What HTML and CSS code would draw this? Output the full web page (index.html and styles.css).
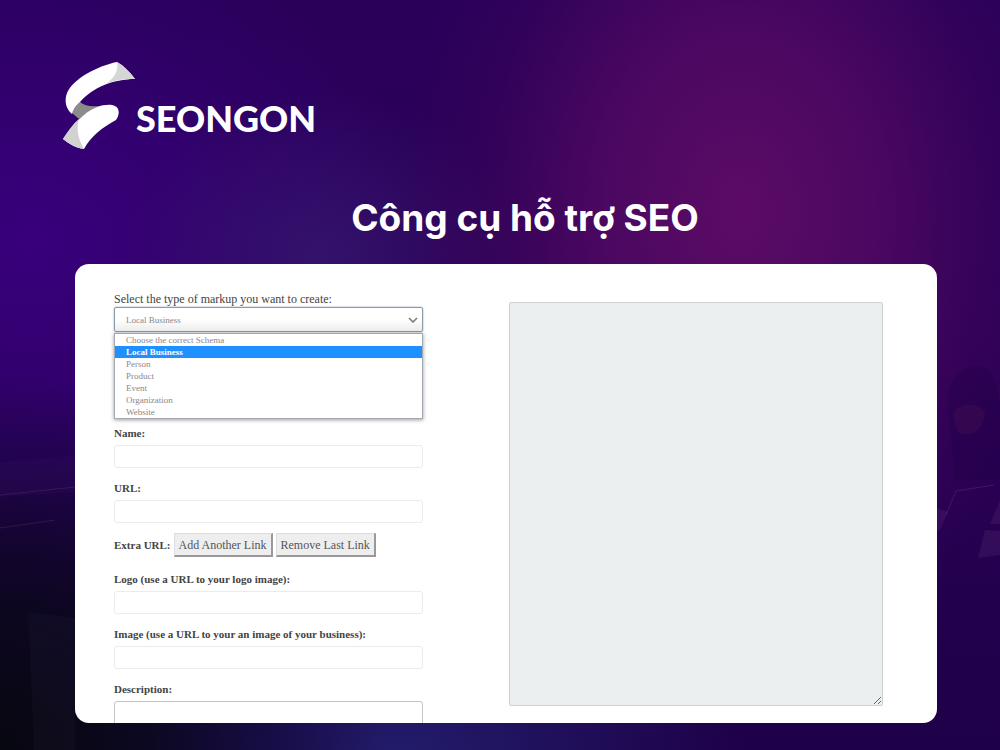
FILE: index.html
```html
<!DOCTYPE html>
<html lang="vi">
<head>
    <meta charset="UTF-8">
    <meta name="viewport" content="width=device-width, initial-scale=1.0">
    <title>SEONGON - Công cụ hỗ trợ SEO</title>
    <link rel="stylesheet" href="styles.css">
</head>
<body>
    <svg class="backdrop" viewBox="0 0 1000 750" preserveAspectRatio="none" aria-hidden="true">
        <path d="M0 462 L80 455 L80 492 L0 497Z" fill="#4a1a70" opacity=".12"/>
        <path d="M0 495 L75 487 M0 528 L55 520" stroke="#7b4a8e" stroke-width="1" opacity=".25"/>
        <path d="M28 612 L75 618 L75 750 L34 750Z" fill="#3a3a5c" opacity=".1"/>
        <path d="M948 410 C946 376 965 362 982 367 C996 372 1000 392 1000 420 L1000 480 L955 480Z" fill="#16003a" opacity=".2"/>
        <path d="M953 414 C958 402 978 402 985 412 C984 430 970 440 958 432Z" fill="#682052" opacity=".18"/>
        <path d="M946 515 L956 491 L994 485" fill="none" stroke="#6d3b84" opacity=".35"/>
        <path d="M937 508 L948 512 L940 530 L937 531Z M1000 500 L990 524 L1000 524Z M985 530 L1000 531 L1000 555 L978 558Z" fill="#6d3b84" opacity=".2"/>
    </svg>

    <div class="page">
        <a class="logo" href="#">
            <svg class="logo-mark" viewBox="0 0 74 90" aria-hidden="true">
                <path d="M18 41 C23 45 29 46 37 45 L17 58 L10 52 C12 47 14 44 18 41Z" fill="#8c8c8c"/>
                <path d="M55 1 C62 5 68 11 73 18 C51 18 30 27 18 41 C13 45 11 49 10 53 C4 48 2 40 5 32 C11 18 35 5 55 1Z" fill="#fff"/>
                <path d="M55 1 C62 5 68 11 73 18 C62 18 53 19 44 23 C52 17 57 10 55 1Z" fill="#d6d6d6"/>
                <path d="M1 78 C7 69 13 61 22 54 C31 46 42 43 50 44 C57 45 59 52 54 59 C41 66 29 75 22 88 C14 87 7 83 1 78Z" fill="#fff"/>
                <path d="M1 78 C6 70 11 63 17 58 C14 67 16 78 22 88 C14 87 7 83 1 78Z" fill="#d2d2d2"/>
            </svg>
            <span class="logo-name">SEONGON</span>
        </a>

        <h1>Công cụ hỗ trợ SEO</h1>

        <main class="card">
            <form class="markup-form">
                <div class="type-field">
                    <label for="markupType">Select the type of markup you want to create:</label>
                    <div class="select-wrap">
                        <select id="markupType">
                            <option>Choose the correct Schema</option>
                            <option selected>Local Business</option>
                            <option>Person</option>
                            <option>Product</option>
                            <option>Event</option>
                            <option>Organization</option>
                            <option>Website</option>
                        </select>
                        <svg class="chevron" viewBox="0 0 10 6" aria-hidden="true">
                            <path d="M1 1 L5 5 L9 1" fill="none" stroke="#777" stroke-width="1.5"/>
                        </svg>
                        <ul class="menu" role="listbox" aria-label="Markup type">
                            <li role="option">Choose the correct Schema</li>
                            <li role="option" class="selected" aria-selected="true">Local Business</li>
                            <li role="option">Person</li>
                            <li role="option">Product</li>
                            <li role="option">Event</li>
                            <li role="option">Organization</li>
                            <li role="option">Website</li>
                        </ul>
                    </div>
                </div>

                <div class="field">
                    <label for="name">Name:</label>
                    <input type="text" id="name">
                </div>

                <div class="field">
                    <label for="url">URL:</label>
                    <input type="text" id="url">
                </div>

                <div class="extra-links">
                    <span>Extra URL:</span>
                    <button type="button">Add Another Link</button>
                    <button type="button">Remove Last Link</button>
                </div>

                <div class="field">
                    <label for="logo">Logo (use a URL to your logo image):</label>
                    <input type="text" id="logo">
                </div>

                <div class="field">
                    <label for="image">Image (use a URL to your an image of your business):</label>
                    <input type="text" id="image">
                </div>

                <div class="field">
                    <label for="description">Description:</label>
                    <textarea id="description"></textarea>
                </div>
            </form>

            <textarea class="output" aria-label="Generated markup" readonly></textarea>
        </main>
    </div>
</body>
</html>
```

FILE: styles.css
```css
* {
    box-sizing: border-box;
    margin: 0;
    padding: 0;
}

body {
    font-family: "Liberation Serif", serif;
    color: #444;
    background:
        radial-gradient(ellipse 34% 62% at 74% 28%, rgba(94, 12, 102, 0.95), rgba(86, 10, 100, 0.75) 40%, rgba(70, 6, 90, 0.3) 75%, transparent),
        radial-gradient(ellipse 38% 50% at 0% 100%, #07070f, rgba(8, 8, 22, 0.8) 40%, rgba(12, 8, 45, 0.4) 75%, transparent),
        radial-gradient(ellipse 35% 24% at 40% 100%, #221c6a, transparent),
        radial-gradient(ellipse 20% 22% at 32% 34%, rgba(54, 26, 110, 0.7), transparent),
        radial-gradient(ellipse 40% 42% at 3% 32%, #38007c, rgba(54, 0, 120, 0.7) 45%, transparent),
        linear-gradient(180deg, #28005a 0%, #2c0058 45%, #1e0048 100%);
    height: 100vh;
}

.backdrop {
    position: absolute;
    z-index: -1;
    width: 100%;
    height: 100%;
}

.page {
    display: flex;
    flex-direction: column;
    height: 100vh;
    padding: 61px 63px 27px 62px;
}

.logo {
    display: flex;
    align-self: flex-start;
    color: #fff;
    text-decoration: none;
}

.logo-mark {
    width: 74px;
    height: 90px;
}

.logo-name {
    font-family: Lato, sans-serif;
    font-size: 36px;
    font-weight: 900;
    line-height: 42px;
    margin-top: 36px;
}

h1 {
    font-family: Inter, sans-serif;
    font-size: 37px;
    font-weight: 700;
    line-height: 48px;
    color: #fff;
    text-align: center;
    margin: 43px 0 22px;
    padding-left: 51px;
}

.card {
    display: flex;
    justify-content: space-between;
    flex: 1;
    min-height: 0;
    margin-left: 13px;
    padding: 27px 54px 0 39px;
    background-color: #fff;
    border-radius: 14px;
    overflow: hidden;
}

.markup-form {
    width: 40.2%;
}

label,
.extra-links {
    display: block;
    font-size: 11px;
    font-weight: 700;
    line-height: 16px;
}

.type-field {
    margin-bottom: 93px;
}

.type-field label {
    font-size: 12px;
    font-weight: 400;
}

.select-wrap {
    position: relative;
}

select {
    display: block;
    width: 100%;
    height: 25px;
    padding: 0 11px;
    appearance: none;
    border: 1px solid #8e9aa8;
    border-radius: 2px;
    background: linear-gradient(#fff 50%, #ececec);
    box-shadow: 0 0 2px #8aa0b8;
    font-family: inherit;
    font-size: 9px;
    color: #888;
}

.chevron {
    position: absolute;
    top: 10px;
    right: 5px;
    width: 10px;
    height: 6px;
}

.menu {
    position: absolute;
    top: 26px;
    left: 0;
    width: 100%;
    list-style: none;
    border: 1px solid #a4a8b0;
    background-color: #fff;
    box-shadow: 0 1px 4px rgba(0, 0, 0, 0.4);
    font-size: 9px;
    line-height: 12px;
    color: #888;
}

.menu li {
    padding-left: 11px;
}

.menu .selected {
    background-color: #1e90ff;
    color: #fff;
    font-weight: 700;
}

.field {
    margin-bottom: 12px;
}

.field input,
.field textarea {
    display: block;
    width: 100%;
    height: 23px;
    margin-top: 4px;
    padding: 2px 8px;
    border: 1px solid #ebebeb;
    border-radius: 3px;
    font-family: inherit;
    font-size: 12px;
}

.field textarea {
    height: 60px;
    border-color: #c4c4c4;
}

.extra-links {
    display: flex;
    align-items: center;
    gap: 3px;
    margin: -2px 0 14px;
}

.extra-links button {
    height: 24px;
    padding: 2px 4px 0;
    border: 1px solid #ddd;
    border-right: 2px solid #999;
    border-bottom: 2px solid #999;
    background-color: #eee;
    font-family: inherit;
    font-size: 12px;
    color: #555;
}

.output {
    width: 48.7%;
    height: 404px;
    margin-top: 11px;
    padding: 8px;
    border: 1px solid #ccd0d1;
    border-radius: 2px;
    background-color: #ebeff0;
    resize: both;
}
```
